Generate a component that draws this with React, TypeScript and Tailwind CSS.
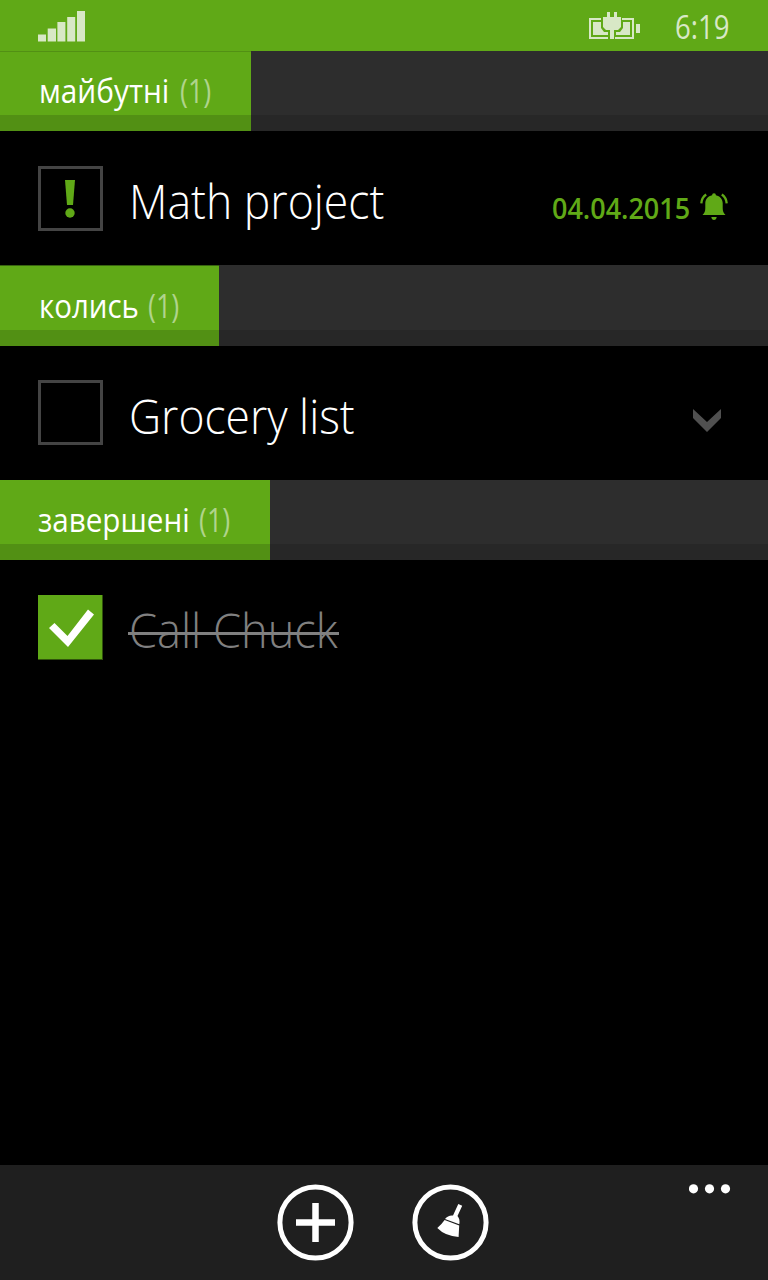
import type { ReactNode } from "react";

function SignalIcon() {
  return (
    <svg width="48" height="31" viewBox="0 0 48 31" fill="#d8e8c6">
      <rect x="0" y="23.5" width="8" height="7" />
      <rect x="9.7" y="17.5" width="8.3" height="13" />
      <rect x="19.4" y="11" width="8" height="19.5" />
      <rect x="29.2" y="6" width="8" height="24.5" />
      <rect x="39" y="0" width="8" height="30.5" />
    </svg>
  );
}

function BatteryIcon() {
  return (
    <svg width="52" height="28" viewBox="0 0 52 28" fill="#d8e8c6">
      <path d="M0 6H12V8H2V25H19V27H0Z" />
      <path d="M45 6H33V8H43V25H26V27H45Z" />
      <path d="M4 10H12V16L15 20H19V23H4Z" />
      <path d="M41 10H34V16L31 20H27V23H41Z" />
      <path d="M18 0H21V5H25V0H28V5H32V15L29 18H25V27H21V18H17L14 15V5H18Z" />
      <rect x="47" y="12" width="4" height="9" />
    </svg>
  );
}

function BellIcon() {
  return (
    <svg width="28" height="28" viewBox="0 0 28 28" fill="#60a917">
      <path d="M14 .2a1.900 1.900 0 0 1 1.900 2C20 3.100 22.500 6 22.700 10v5c0 3.300.8 5 2.800 7H2.500c2-2 2.800-3.700 2.800-7v-5c.2-4 2.700-6.900 6.800-7.800A1.900 1.900 0 0 1 14 .2Z" />
      <path d="M11.300 24H16.700C16.400 26 15.500 27 14 27S11.600 26 11.300 24Z" />
      <path d="M6.200 1.500C3.300 3.500 1.600 6.500 1.300 10.300M21.800 1.500c2.900 2 4.600 5 4.900 8.800" fill="none" stroke="#60a917" strokeWidth="2.300" />
    </svg>
  );
}

function SectionHeader({ className, children }: { className: string; children: ReactNode }) {
  return (
    <header className="flex w-full shrink-0 border-b-16 border-[#272727] bg-[#2d2d2d]">
      <div className={`-mb-4 flex shrink-0 items-start border-b-16 border-[#529014] bg-[#60a917] text-[32px] leading-[44px] ${className}`}>
        {children}
      </div>
    </header>
  );
}

function Label({ className, children }: { className: string; children: ReactNode }) {
  return <span className={`inline-block origin-left whitespace-pre ${className}`}>{children}</span>;
}

function TaskRow({ box, children }: { box: ReactNode; children: ReactNode }) {
  return (
    <div className="flex h-[134px] shrink-0 items-start pt-[35px] pl-[38px]">
      {box}
      <div className="ml-[26px] flex flex-1 items-start">{children}</div>
    </div>
  );
}

export default function App() {
  return (
    <main className="flex h-[1280px] w-[768px] flex-col overflow-hidden bg-black font-['Open_Sans','Noto_Sans',sans-serif] text-white">
      <div className="flex h-[51px] shrink-0 items-start bg-[#60a917] pl-[38px]">
        <div className="mt-[11px]"><SignalIcon /></div>
        <div className="mt-[12px] ml-[503px]"><BatteryIcon /></div>
        <Label className="mt-[5px] ml-[34px] text-[32px] leading-[44px] font-[375] text-[#d8e8c6] scale-x-[0.86]">6:19</Label>
      </div>

      <SectionHeader className="h-[80px] w-[251px] border-t border-t-[#529014] pt-[17px] pl-[39px]">
        <Label className="w-[141px] scale-x-[0.93]">майбутні</Label>
        <Label className="font-[375] text-[#b0d48b] scale-x-[0.84]">(1)</Label>
      </SectionHeader>
      <TaskRow
        box={
          <div className="flex size-[65px] border-[3px] border-[#444] pt-[10px] pl-[23px]">
            <svg width="12" height="40" viewBox="0 0 12 40" fill="#60a917">
              <path d="M1 1H11L9 26H3Z" />
              <circle cx="6" cy="34" r="4.700" />
            </svg>
          </div>
        }
      >
        <Label className="mt-[2px] w-[423px] text-[48px] leading-[66px] font-light scale-x-[0.928]">Math project</Label>
        <Label className="mt-[23px] w-[148px] text-[28px] leading-[38px] font-semibold text-[#60a917] scale-x-[0.963]">04.04.2015</Label>
        <div className="mt-[27px]"><BellIcon /></div>
      </TaskRow>

      <SectionHeader className="h-[81px] w-[219px] border-t border-t-[#386310] pt-[18px] pl-[39px]">
        <Label className="w-[109px] scale-x-[0.92]">колись</Label>
        <Label className="font-[375] text-[#b0d48b] scale-x-[0.84]">(1)</Label>
      </SectionHeader>
      <TaskRow box={<div className="-mt-px size-[65px] border-[3px] border-[#444]" />}>
        <Label className="mt-[2px] w-[564px] text-[48px] leading-[66px] font-light scale-x-[0.925]">Grocery list</Label>
        <svg className="mt-[28px]" width="28" height="23" viewBox="0 0 28 23" fill="#505050">
          <path d="M0 0L14 13L28 0V9L14 23L0 9Z" />
        </svg>
      </TaskRow>

      <SectionHeader className="h-[80px] w-[270px] pt-[18px] pl-[38px]">
        <Label className="w-[161px] scale-x-[0.925]">завершені</Label>
        <Label className="font-[375] text-[#b0d48b] scale-x-[0.84]">(1)</Label>
      </SectionHeader>
      <TaskRow
        box={
          <div className="size-[65px] border-r border-b border-[#30540b] bg-[#60a917]">
            <svg width="64" height="64" viewBox="0 0 64 64" fill="white">
              <path d="M11 33L16.500 28L29.500 41L50 14.500L56 19.500L30 52Z" />
            </svg>
          </div>
        }
      >
        <div className="relative mt-[2px] text-[48px] leading-[66px] font-light text-[#808080]">
          <Label className="scale-x-[0.94]">Call Chuck</Label>
          <div className="absolute top-[35px] left-[-1px] h-[3px] w-[211px] bg-[#808080]" />
        </div>
      </TaskRow>

      <footer className="mt-auto flex h-[115px] shrink-0 items-start bg-[#1f1f1f] pl-[277px]">
        <svg className="mt-[19px]" width="77" height="77" viewBox="0 0 77 77" fill="none" stroke="white">
          <circle cx="38.500" cy="38.500" r="35.600" strokeWidth="5" />
          <path d="M19 38.500H58M38.500 19V58" strokeWidth="6.500" />
        </svg>
        <svg className="mt-[19px] ml-[58px]" width="77" height="77" viewBox="0 0 77 77" fill="white">
          <circle cx="38.500" cy="38.500" r="35.600" fill="none" stroke="white" strokeWidth="5" />
          <path d="M46.300 20L50.200 21.800L45.500 32Q48.200 35 47.300 40.200L33 35Q36 31 41 31.500Z" />
          <path d="M32.600 36L47.200 41.500L46.600 53Q33 52 25.300 44Q29.500 40.500 32.600 36Z" />
        </svg>
        <svg className="mt-[19px] ml-[200px]" width="42" height="10" viewBox="0 0 42 10" fill="white">
          <circle cx="4.500" cy="4.800" r="4.600" />
          <circle cx="20.500" cy="4.800" r="4.600" />
          <circle cx="36.500" cy="4.800" r="4.600" />
        </svg>
      </footer>
    </main>
  );
}
